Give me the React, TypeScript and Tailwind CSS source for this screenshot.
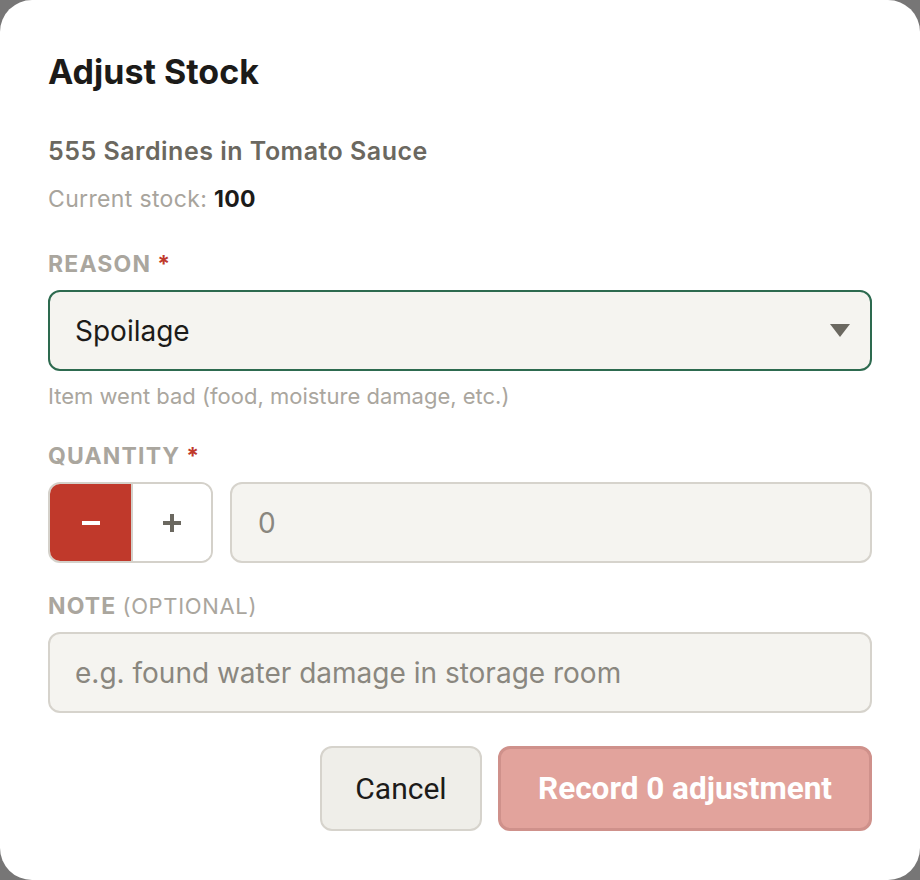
import { useState } from "react";

const inter = { fontFamily: "Inter, 'Noto Sans', sans-serif" };

function FieldLabel({ text, required, optional }: { text: string; required?: boolean; optional?: boolean }) {
  return (
    <div className="h-[28px] text-[23px] leading-[28px] font-bold uppercase tracking-[0.05em] text-[#aaa69e]">
      {text}
      {required && <span className="ml-[6px] text-[#c0392b]">*</span>}
      {optional && <span className="ml-[6px] font-normal tracking-[0.03em] text-[22px]">(optional)</span>}
    </div>
  );
}

export default function App() {
  const [qty] = useState(0);

  return (
    <div className="min-h-screen w-full bg-[#777676]" style={inter}>
      <div className="flex h-[880px] w-[920px] flex-col rounded-[32px] bg-white px-[48px] pt-[54px]">
        <h2 className="text-[34px] leading-[36px] font-bold text-[#1c1b19]">Adjust Stock</h2>

        <p className="mt-[46px] text-[25px] leading-[30px] font-semibold tracking-[0.02em] text-[#6b6860]">
          555 Sardines in Tomato Sauce
        </p>
        <p className="mt-[19px] text-[23px] leading-[28px] tracking-[0.015em] text-[#a8a49c]">
          Current stock: <span className="font-bold text-[#1c1b19]">{100}</span>
        </p>

        <div className="mt-[37px]">
          <FieldLabel text="Reason" required />
        </div>
        <div className="mt-[12px] flex h-[81px] items-center justify-between rounded-[12px] border-2 border-[#2d6a4f] bg-[#f5f4f0] pl-[25px] pr-[20px]">
          <span className="text-[28px] text-[#1c1b19]">Spoilage</span>
          <svg width="20" height="14" viewBox="0 0 20 14">
            <path d="M0 0 H20 L10 13 Z" fill="#6b6860" />
          </svg>
        </div>
        <p className="mt-[13px] text-[22px] leading-[24px] text-[#aaa69e]">
          Item went bad (food, moisture damage, etc.)
        </p>

        <div className="mt-[34px]">
          <FieldLabel text="Quantity" required />
        </div>
        <div className="mt-[12px] flex h-[81px] gap-[17px]">
          <div className="flex w-[165px] overflow-hidden rounded-[12px] border-2 border-[#d4d1ca]">
            <button className="flex w-[81px] items-center justify-center bg-[#c0392b]">
              <span className="block h-[4px] w-[18px] bg-white" />
            </button>
            <button className="flex flex-1 items-center justify-center border-l-2 border-[#d4d1ca] bg-white">
              <svg width="18" height="18" viewBox="0 0 18 18">
                <path d="M7 0 H11 V7 H18 V11 H11 V18 H7 V11 H0 V7 H7 Z" fill="#6b6860" />
              </svg>
            </button>
          </div>
          <div className="flex flex-1 items-center rounded-[12px] border-2 border-[#d6d3cc] bg-[#f5f4f0] pl-[26px]">
            <span className="text-[28px] text-[#8a877f]">{qty}</span>
          </div>
        </div>

        <div className="mt-[29px]">
          <FieldLabel text="Note" optional />
        </div>
        <div className="mt-[12px] flex h-[81px] items-center rounded-[12px] border-2 border-[#d6d3cc] bg-[#f5f4f0] pl-[25px]">
          <span className="text-[28px] text-[#8a877f]">e.g. found water damage in storage room</span>
        </div>

        <div className="mt-[33px] flex justify-end gap-[16px]" style={{ fontFamily: "Roboto, sans-serif" }}>
          <button className="h-[85px] w-[162px] rounded-[12px] border-2 border-[#d6d3cc] bg-[#efeee9] text-[30px] text-[#1c1b19]">
            Cancel
          </button>
          <button className="h-[85px] w-[374px] rounded-[12px] border-[3px] border-[#cf918b] bg-[#e2a39c] text-[31.5px] font-bold text-white">
            Record {qty} adjustment
          </button>
        </div>
      </div>
    </div>
  );
}
